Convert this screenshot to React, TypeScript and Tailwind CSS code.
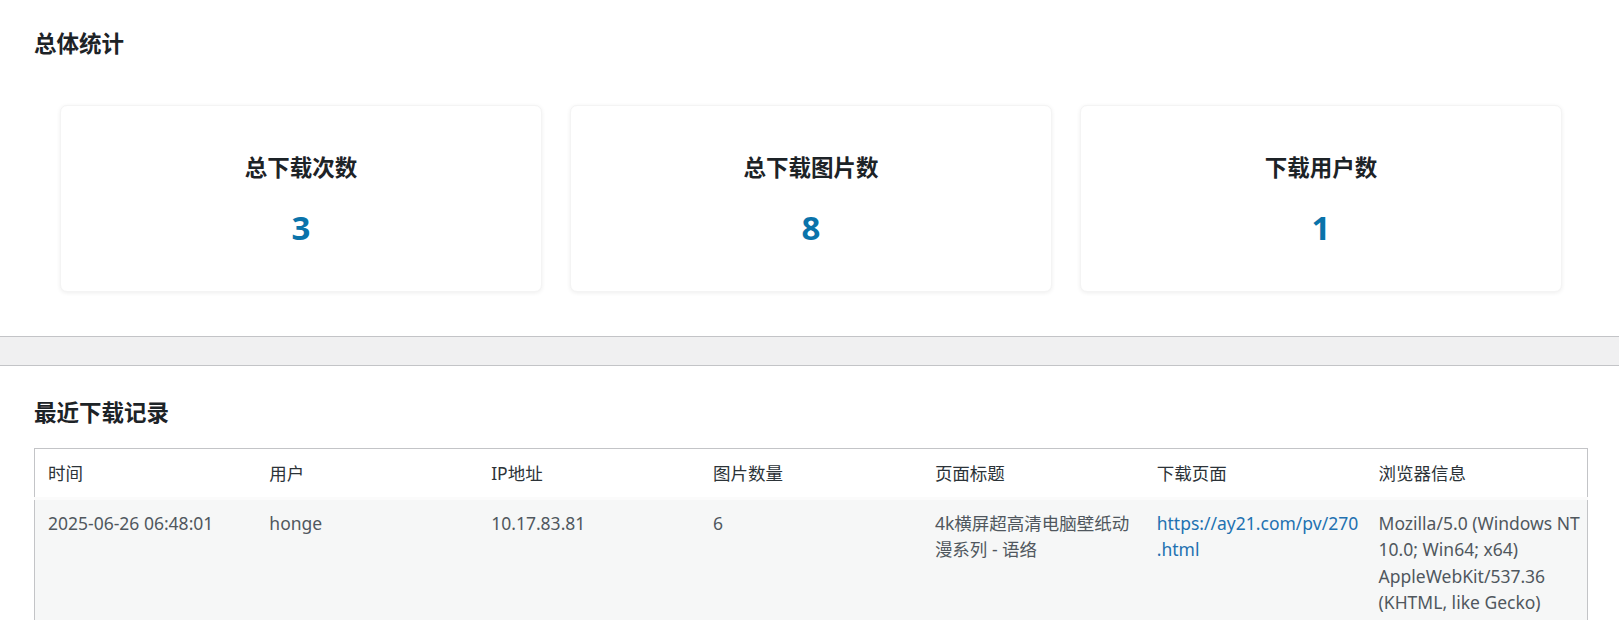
import React from "react";

const stats = [
  { label: "总下载次数", value: "3" },
  { label: "总下载图片数", value: "8" },
  { label: "下载用户数", value: "1" },
];

const headers = ["时间", "用户", "IP地址", "图片数量", "页面标题", "下载页面", "浏览器信息"];

export default function App() {
  return (
    <div
      className="w-full h-[620px] overflow-hidden bg-white text-[#1d2327]"
      style={{ fontFamily: '"Noto Sans", "Noto Sans CJK SC", sans-serif' }}
    >
      {/* 总体统计 */}
      <section className="pl-[34px] pr-[31px] pt-[29px] pb-[44px]">
        <h2 className="text-[22.5px] leading-[30px] font-bold text-[#1d2327]">总体统计</h2>
        <div className="mt-[46px] px-[26px] grid grid-cols-3 gap-[28px]">
          {stats.map((s) => (
            <div
              key={s.label}
              className="bg-white rounded-[7px] shadow-[0_1px_4px_rgba(0,0,0,0.07)] border border-[#f4f4f4] pt-[47px] pb-[43px] flex flex-col items-center"
            >
              <div className="text-[22.5px] leading-[30px] font-bold text-[#1d2327]">{s.label}</div>
              <div className="mt-[24.5px] text-[33px] leading-[40px] font-bold text-[#0a73aa]">{s.value}</div>
            </div>
          ))}
        </div>
      </section>

      {/* separator band */}
      <div className="h-[30px] bg-[#f0f0f1] border-y border-[#c3c4c7]" />

      {/* 最近下载记录 */}
      <section className="pl-[34px] pr-[31px] pt-[32px]">
        <h2 className="text-[22.5px] leading-[30px] font-bold text-[#1d2327]">最近下载记录</h2>
        <table className="mt-[20px] w-full table-fixed border-collapse border border-[#c3c4c7] text-[17.5px]">
          <thead>
            <tr className="bg-white border-b border-[#c3c4c7]">
              {headers.map((h) => (
                <th
                  key={h}
                  className="px-[13px] py-[11px] text-left font-normal leading-[26px] text-[#2c3338] whitespace-nowrap"
                >
                  {h}
                </th>
              ))}
            </tr>
          </thead>
          <tbody>
            <tr className="bg-[#f6f7f7] border-t-[3px] border-t-[#fbfbfb]">
              <td className="px-[13px] pt-[10px] pb-[4px] align-top leading-[26.5px] text-[#50575e] whitespace-nowrap">
                2025-06-26 06:48:01
              </td>
              <td className="px-[13px] pt-[10px] pb-[4px] align-top leading-[26.5px] text-[#50575e]">honge</td>
              <td className="px-[13px] pt-[10px] pb-[4px] align-top leading-[26.5px] text-[#50575e]">10.17.83.81</td>
              <td className="px-[13px] pt-[10px] pb-[4px] align-top leading-[26.5px] text-[#50575e]">6</td>
              <td className="px-[13px] pt-[10px] pb-[4px] align-top leading-[26.5px] text-[#50575e] whitespace-nowrap">
                4k横屏超高清电脑壁纸动
                <br />
                漫系列 - 语络
              </td>
              <td className="px-[13px] pt-[10px] pb-[4px] align-top leading-[26.5px] whitespace-nowrap">
                <a href="#" className="text-[#2271b1]">
                  https://ay21.com/pv/270
                  <br />
                  .html
                </a>
              </td>
              <td className="px-[13px] pt-[10px] pb-[4px] align-top leading-[26.5px] text-[#50575e] whitespace-nowrap">
                Mozilla/5.0 (Windows NT
                <br />
                10.0; Win64; x64)
                <br />
                AppleWebKit/537.36
                <br />
                (KHTML, like Gecko)
              </td>
            </tr>
          </tbody>
        </table>
      </section>
    </div>
  );
}
